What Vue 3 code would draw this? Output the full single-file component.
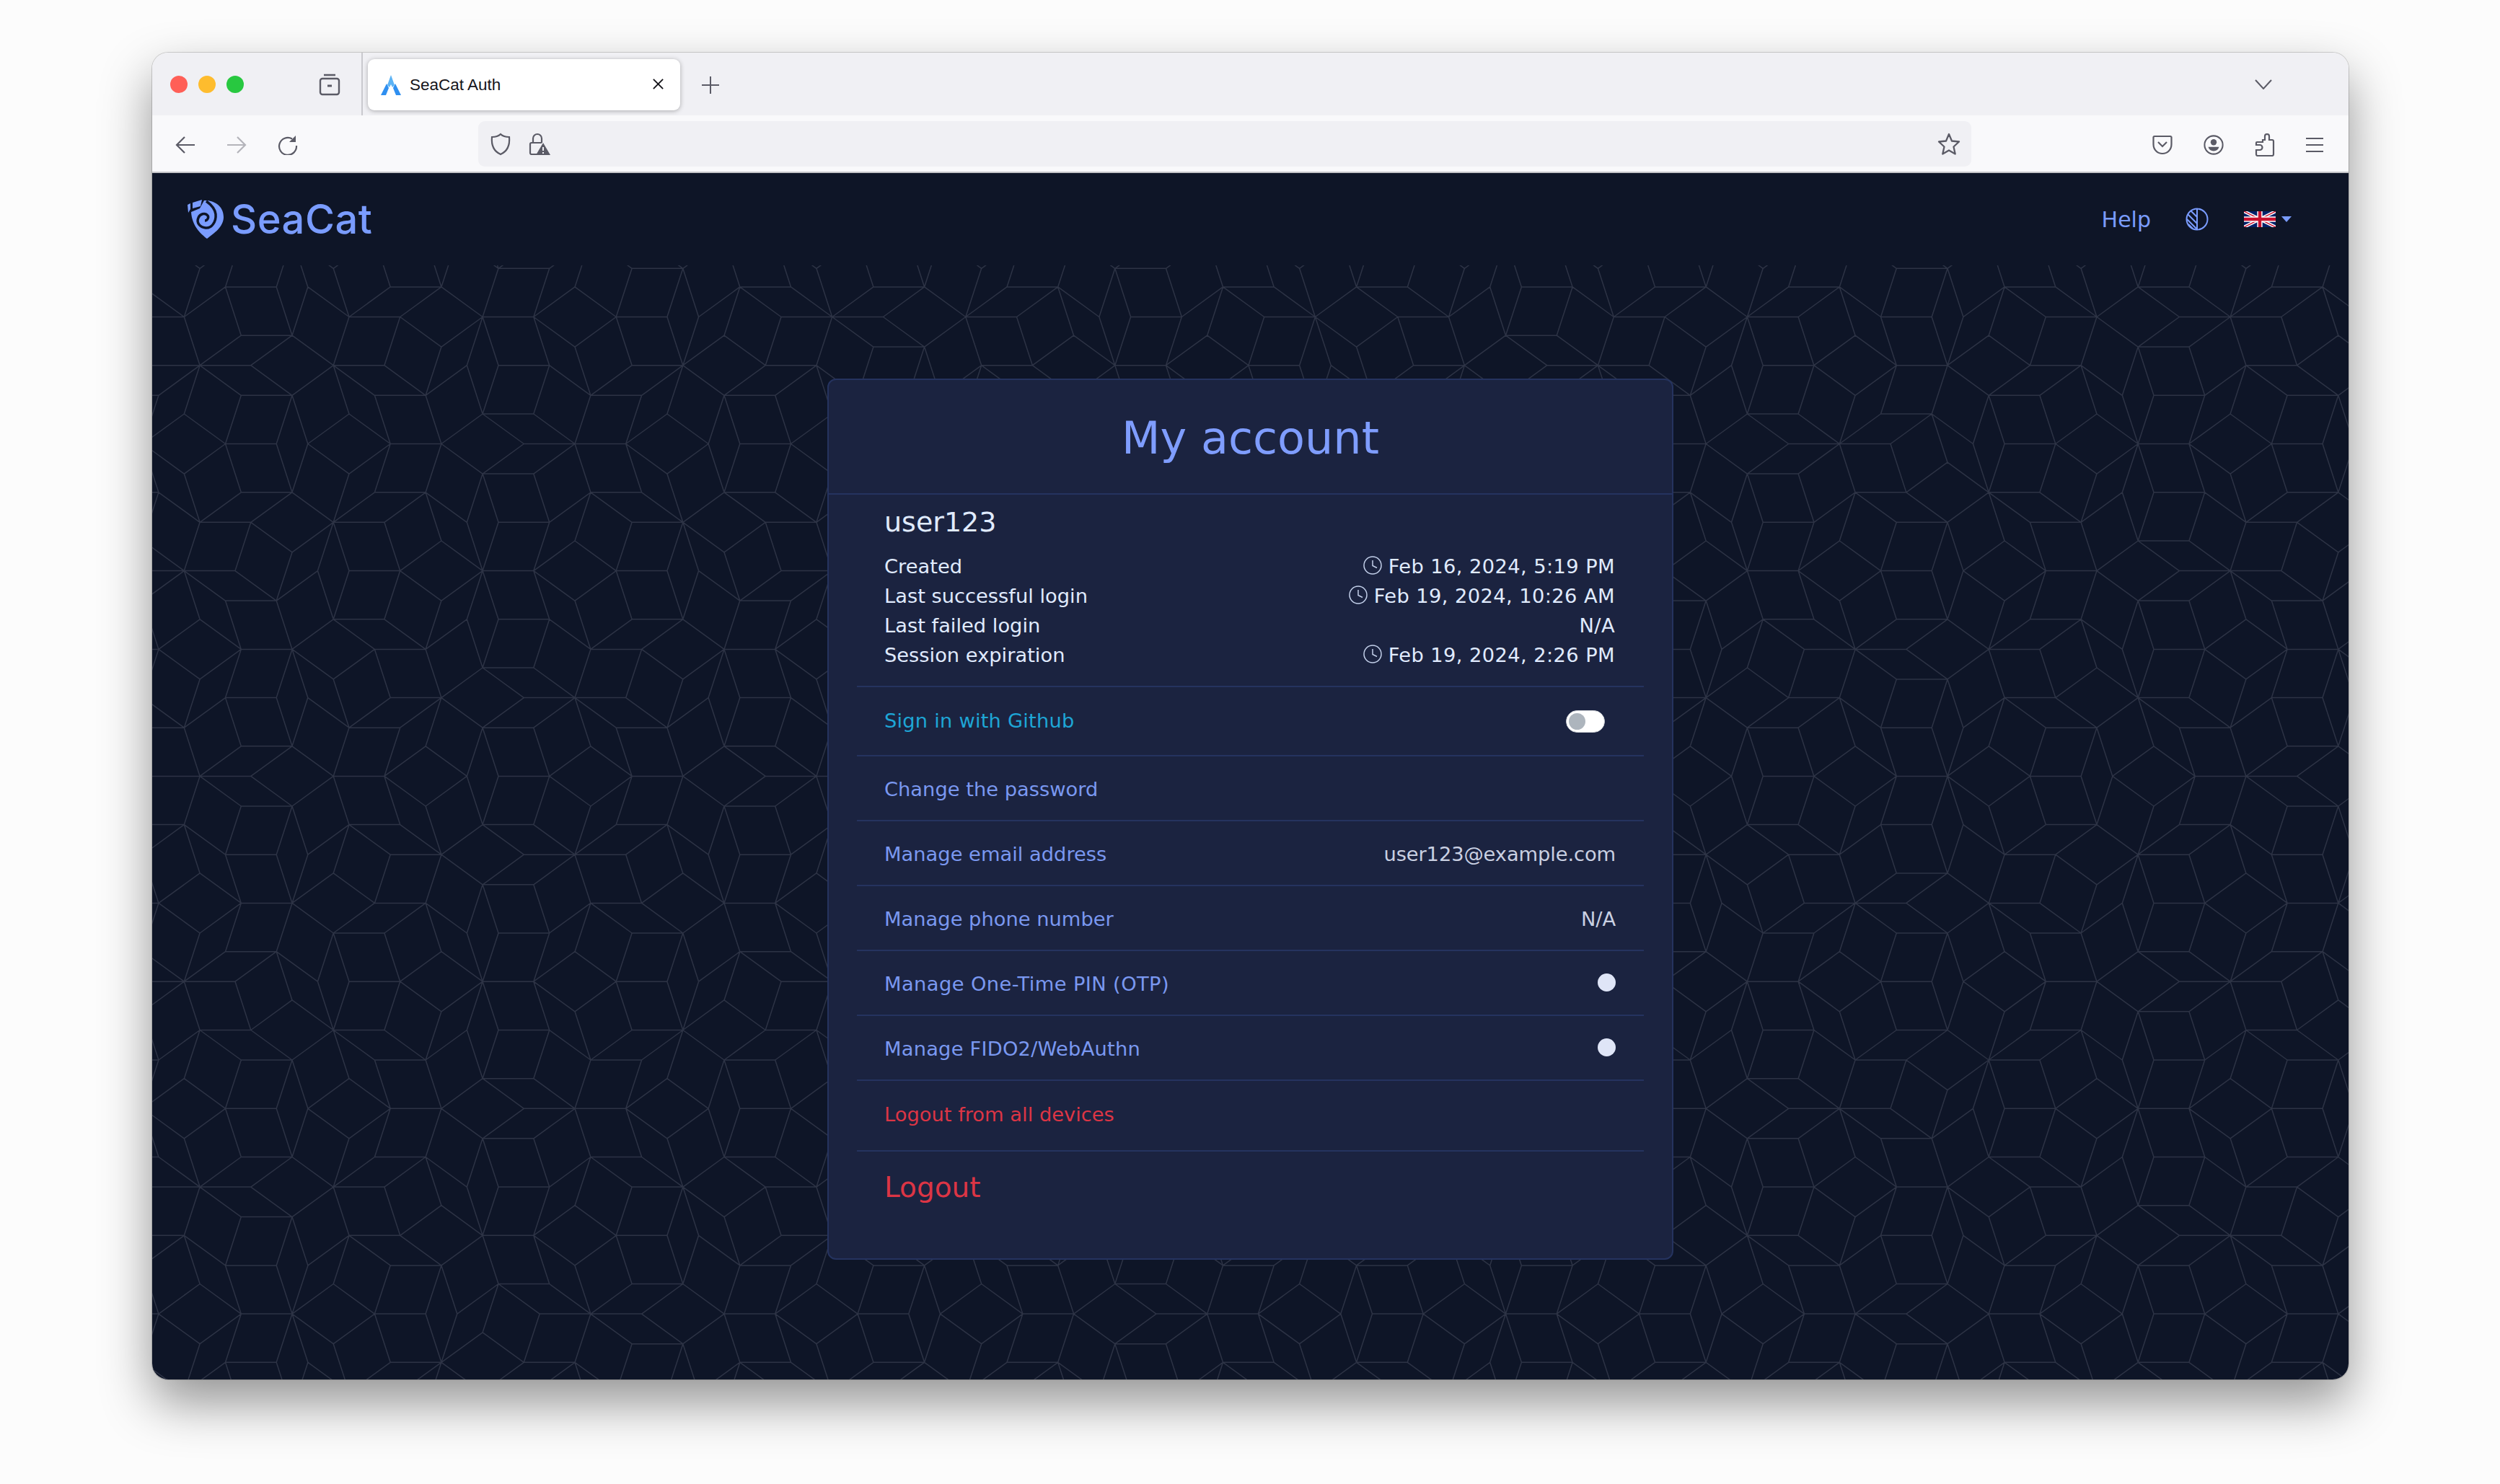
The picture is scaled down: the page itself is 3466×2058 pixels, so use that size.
<template>
  <div class="screen">
    <div class="window">
      <div class="tabstrip">
        <div class="lights">
          <span class="light red"></span>
          <span class="light yellow"></span>
          <span class="light green"></span>
        </div>
        <svg class="archive" viewBox="0 0 32 32" fill="none" stroke="#5b5b66" stroke-width="2.4">
          <path d="M8 3h16" />
          <rect x="3" y="8" width="26" height="22" rx="3" />
          <path d="M13 18h6" stroke-width="3" />
        </svg>
        <span class="tab-sep"></span>
        <div class="tab">
          <svg class="favicon" viewBox="0 0 30 28">
            <path d="M15 0l5 14-3 3-2-4-2 4-3-3z" fill="#5cb3f5" />
            <path d="M9 12l3 6-4 10H1z" fill="#2f8ff0" />
            <path d="M21 12l-3 6 4 10h7z" fill="#2f8ff0" />
          </svg>
          <span class="tab-title">SeaCat Auth</span>
          <svg class="tab-close" viewBox="0 0 18 18" fill="none" stroke="#15141a" stroke-width="2">
            <path d="M2 2l14 14M16 2L2 16" />
          </svg>
        </div>
        <svg class="newtab" viewBox="0 0 24 24" fill="none" stroke="#5b5b66" stroke-width="2">
          <path d="M12 0v24M0 12h24" />
        </svg>
        <svg class="tablist" viewBox="0 0 24 14" fill="none" stroke="#5b5b66" stroke-width="2">
          <path d="M1 1l11 12L23 1" />
        </svg>
      </div>

      <div class="toolbar">
        <svg class="tool" viewBox="0 0 28 28" fill="none" stroke="#5b5b66" stroke-width="2.2">
          <path d="M27 14H3M13 3L2 14l11 11" />
        </svg>
        <svg class="tool" viewBox="0 0 28 28" fill="none" stroke="#b4b4ba" stroke-width="2.2">
          <path d="M1 14h24M15 3l11 11-11 11" />
        </svg>
        <svg class="tool" viewBox="0 0 28 28" fill="none" stroke="#5b5b66" stroke-width="2.2">
          <path d="M20 5.500A12 12 0 1 0 26 15" />
          <path d="M25 1v9h-9" fill="#5b5b66" stroke="none" />
        </svg>
        <div class="urlbar">
          <svg class="url-shield" viewBox="0 0 30 32" fill="none" stroke="#5b5b66" stroke-width="2.2">
            <path d="M15 2c3 3 8 4 12 4 1 11-3 20-12 24C6 26 2 17 3 6c4 0 9-1 12-4z" />
          </svg>
          <svg class="url-lock" viewBox="0 0 30 32" fill="none" stroke="#5b5b66" stroke-width="2.2">
            <path d="M6 14V8a6 6 0 0 1 12 0v6" />
            <path d="M13 30H4a2 2 0 0 1-2-2V16a2 2 0 0 1 2-2h14" />
            <path d="M20 14l10 17H10z" fill="#5b5b66" stroke="none" />
            <path d="M20 20v5M20 27v2" stroke="#f0f0f4" stroke-width="2" />
          </svg>
          <svg class="url-star" viewBox="0 0 32 32" fill="none" stroke="#5b5b66" stroke-width="2.3" stroke-linejoin="round">
            <path d="M16 2l4 9.500 10 1-7.500 7 2.200 10L16 24.500l-8.700 5 2.200-10L2 12.500l10-1z" />
          </svg>
        </div>
        <svg class="tool" viewBox="0 0 28 28" fill="none" stroke="#5b5b66" stroke-width="2.2">
          <path d="M3 2h22a1.500 1.500 0 0 1 1.500 1.500V13c0 8-6 13-12.500 13S1.500 21 1.500 13V3.500A1.500 1.500 0 0 1 3 2z" />
          <path d="M8 10l6 6 6-6" />
        </svg>
        <svg class="tool" viewBox="0 0 30 30" fill="none" stroke="#5b5b66" stroke-width="2.2">
          <circle cx="15" cy="15" r="13.500" />
          <circle cx="15" cy="11" r="4.500" fill="#5b5b66" stroke="none" />
          <path d="M7 18h16c-1 4-4 6-8 6s-7-2-8-6z" fill="#5b5b66" stroke="none" />
        </svg>
        <svg class="tool puzzle" viewBox="0 0 28 32" fill="none" stroke="#5b5b66" stroke-width="2.2">
          <path d="M11 9h3V4a3 3 0 0 1 6 0v5h4a2 2 0 0 1 2 2v18a2 2 0 0 1-2 2H4a2 2 0 0 1-2-2v-6h5a3 3 0 0 0 0-7H2v-3a1 1 0 0 1 1-1h8z" />
        </svg>
        <svg class="tool menu" viewBox="0 0 28 24" fill="none" stroke="#5b5b66" stroke-width="2.2">
          <path d="M2 3h24M2 12h24M2 21h24" />
        </svg>
      </div>

      <div class="app">
        <header class="app-header">
          <div class="brand">
            <svg class="brand-mark" viewBox="0 0 50 55">
              <path d="M0 7l4-2v8l-3 5z" fill="#7a9cff" />
              <path d="M7 4L20 0l-2 9-11 3z" fill="#7a9cff" />
              <path d="M23 1C33 0 50 6 50 24 50 38 36 47 27 54 18 47 6 36 5 17l12-5z" fill="#7a9cff" />
              <path d="M26 2C33 7 38 12 39 20 40 31 33 40 25 39 17 38 12 32 15 25 17 20 24 17 28 22 30 25 27 29 24 29" fill="none" stroke="#0e1527" stroke-width="3.500" />
            </svg>
            <span class="brand-name">SeaCat</span>
          </div>
          <nav class="app-nav">
            <a class="help">Help</a>
            <svg class="theme" viewBox="0 0 32 32" fill="none" stroke="#7a9cff" stroke-width="2">
              <circle cx="16" cy="16" r="14.500" />
              <path d="M16 1.500v29M7 4l9 9M3 9l13 13M2 16l14 14M4 23l6 6" />
            </svg>
            <svg class="flag" viewBox="0 0 60 30">
              <rect width="60" height="30" fill="#012169" />
              <path d="M0 0l60 30M60 0L0 30" stroke="#fff" stroke-width="6" />
              <path d="M0 0l60 30M60 0L0 30" stroke="#c8102e" stroke-width="2" />
              <path d="M30 0v30M0 15h60" stroke="#fff" stroke-width="10" />
              <path d="M30 0v30M0 15h60" stroke="#c8102e" stroke-width="6" />
            </svg>
            <span class="caret"></span>
          </nav>
        </header>

        <main class="main">
          <svg class="tiles" width="3045" height="1545">
            <path :d="tilePath" fill="none" stroke="#2d3345" stroke-width="1.500" />
          </svg>

          <section class="card">
            <div class="card-head">
              <h2>My account</h2>
            </div>
            <div class="card-body">
              <h3 class="username">user123</h3>
              <div class="info">
                <div v-for="row in infoRows" :key="row.label" class="info-row">
                  <span>{{ row.label }}</span>
                  <span class="info-value">
                    <svg v-if="row.clock" class="clock" viewBox="0 0 26 26" fill="none" stroke="#c3d0ea" stroke-width="1.500">
                      <circle cx="13" cy="13" r="12" />
                      <path d="M13 6v7.500l6 3" />
                    </svg>
                    {{ row.value }}
                  </span>
                </div>
              </div>

              <ul class="items">
                <li class="item tall github">
                  <span>Sign in with Github</span>
                  <span class="toggle"><span class="knob"></span></span>
                </li>
                <li v-for="item in items" :key="item.label" class="item" :class="item.cls">
                  <span>{{ item.label }}</span>
                  <span v-if="item.value" class="item-value">{{ item.value }}</span>
                  <span v-if="item.dot" class="dot"></span>
                </li>
                <li class="item tall danger">
                  <span>Logout from all devices</span>
                </li>
              </ul>

              <div class="logout">Logout</div>
            </div>
          </section>
        </main>
      </div>
    </div>
  </div>
</template>

<script setup>
const infoRows = [
  { label: 'Created', value: 'Feb 16, 2024, 5:19 PM', clock: true },
  { label: 'Last successful login', value: 'Feb 19, 2024, 10:26 AM', clock: true },
  { label: 'Last failed login', value: 'N/A', clock: false },
  { label: 'Session expiration', value: 'Feb 19, 2024, 2:26 PM', clock: true }
]

const items = [
  { label: 'Change the password' },
  { label: 'Manage email address', value: 'user123@example.com' },
  { label: 'Manage phone number', value: 'N/A' },
  { label: 'Manage One-Time PIN (OTP)', dot: true, cls: 'wide' },
  { label: 'Manage FIDO2/WebAuthn', dot: true, cls: 'semi-wide' }
]

// background tiling: pentagrid with 5 directions, origin sits on a vertex
const EDGE = 70.7
const ORIGIN = [251.2, 708.4]
const OFFSET = -0.4
const AREA = { w: 3045, h: 1545 }
const COS = [0, 1, 2, 3, 4].map(j => Math.cos(2 * Math.PI * j / 5))
const SIN = [0, 1, 2, 3, 4].map(j => Math.sin(2 * Math.PI * j / 5))

function eachRhomb (box, cb) {
  const scale = 2.5 * EDGE
  const x0 = box[0] / scale - 0.7
  const x1 = box[1] / scale + 0.7
  const y0 = box[2] / scale - 0.7
  const y1 = box[3] / scale + 0.7
  const lo = []
  const hi = []
  for (let j = 0; j < 5; j++) {
    const vals = [x0 * COS[j] + y0 * SIN[j], x0 * COS[j] + y1 * SIN[j], x1 * COS[j] + y0 * SIN[j], x1 * COS[j] + y1 * SIN[j]]
    lo.push(Math.floor(Math.min(...vals) + OFFSET))
    hi.push(Math.ceil(Math.max(...vals) + OFFSET))
  }
  for (let j = 0; j < 4; j++) {
    for (let k = j + 1; k < 5; k++) {
      const det = COS[j] * SIN[k] - SIN[j] * COS[k]
      for (let a = lo[j]; a <= hi[j]; a++) {
        for (let b = lo[k]; b <= hi[k]; b++) {
          const bj = a - OFFSET
          const bk = b - OFFSET
          const zx = (bj * SIN[k] - bk * SIN[j]) / det
          const zy = (COS[j] * bk - COS[k] * bj) / det
          if (zx < x0 || zx > x1 || zy < y0 || zy > y1) continue
          let vx = a * COS[j] + b * COS[k]
          let vy = a * SIN[j] + b * SIN[k]
          for (let l = 0; l < 5; l++) {
            if (l === j || l === k) continue
            const n = Math.ceil(zx * COS[l] + zy * SIN[l] + OFFSET)
            vx += n * COS[l]
            vy += n * SIN[l]
          }
          cb(vx, vy, j, k)
        }
      }
    }
  }
}

function buildPath () {
  const seen = new Set()
  let d = ''
  const box = [-ORIGIN[0] - 150, AREA.w - ORIGIN[0] + 150, -ORIGIN[1] - 150, AREA.h - ORIGIN[1] + 150]
  const line = (ax, ay, bx, by) => {
    const x1 = ORIGIN[0] + ax * EDGE
    const y1 = ORIGIN[1] + ay * EDGE
    const x2 = ORIGIN[0] + bx * EDGE
    const y2 = ORIGIN[1] + by * EDGE
    const p = Math.round(x1) + ',' + Math.round(y1)
    const q = Math.round(x2) + ',' + Math.round(y2)
    const key = p < q ? p + q : q + p
    if (seen.has(key)) return
    seen.add(key)
    d += 'M' + x1.toFixed(1) + ' ' + y1.toFixed(1) + 'L' + x2.toFixed(1) + ' ' + y2.toFixed(1)
  }
  eachRhomb(box, (vx, vy, j, k) => {
    const ax = vx + COS[j]
    const ay = vy + SIN[j]
    const bx = vx + COS[k]
    const by = vy + SIN[k]
    const cx = ax + COS[k]
    const cy = ay + SIN[k]
    line(vx, vy, ax, ay)
    line(ax, ay, cx, cy)
    line(cx, cy, bx, by)
    line(bx, by, vx, vy)
  })
  return d
}

const tilePath = buildPath()
</script>

<style>
html, body {
  margin: 0;
  background: #fff;
}
</style>

<style scoped>
.screen {
  width: 3466px;
  height: 2058px;
  overflow: hidden;
  padding: 73px 0 0 211px;
  box-sizing: border-box;
  background: #fcfcfc;
}
.window {
  width: 3045px;
  height: 1840px;
  border-radius: 22px;
  overflow: hidden;
  box-shadow: 0 0 0 1px rgba(0, 0, 0, .16), 0 32px 70px rgba(0, 0, 0, .42);
  display: flex;
  flex-direction: column;
  font-family: "DejaVu Sans", sans-serif;
}

/* browser chrome */
.tabstrip {
  height: 87px;
  flex: none;
  background: #f0f0f4;
  display: flex;
  align-items: center;
}
.lights {
  display: flex;
  gap: 15px;
  margin-left: 25px;
  margin-top: 1px;
}
.light {
  width: 24px;
  height: 24px;
  border-radius: 50%;
}
.red { background: #ff5f57; }
.yellow { background: #febc2e; }
.green { background: #28c840; }
.archive {
  width: 32px;
  height: 32px;
  margin: 1px 0 0 103px;
}
.tab-sep {
  width: 2px;
  align-self: stretch;
  background: #c9c9ce;
  margin-left: 28px;
}
.tab {
  width: 433px;
  height: 71px;
  margin-left: 7px;
  margin-top: 2px;
  box-sizing: border-box;
  padding: 0 22px 0 17px;
  background: #fff;
  border-radius: 9px;
  box-shadow: 0 1px 6px rgba(0, 0, 0, .3);
  display: flex;
  align-items: center;
}
.favicon {
  width: 30px;
  height: 28px;
}
.tab-title {
  margin-left: 11px;
  font: 22.500px "Liberation Sans", sans-serif;
  color: #15141a;
}
.tab-close {
  width: 17px;
  height: 17px;
  margin-left: auto;
  margin-top: -2px;
}
.newtab {
  width: 24px;
  height: 24px;
  margin-left: 30px;
  margin-top: 3px;
}
.tablist {
  width: 24px;
  height: 14px;
  margin-left: auto;
  margin-right: 106px;
  margin-top: 0;
}

.toolbar {
  height: 80px;
  flex: none;
  box-sizing: border-box;
  background: #f9f9fb;
  border-bottom: 2px solid #c4c4c8;
  display: flex;
  align-items: center;
  padding-left: 32px;
  gap: 43px;
}
.tool {
  width: 28px;
  height: 28px;
  margin-top: 3px;
}
.puzzle {
  height: 32px;
}
.menu {
  margin-left: -2px;
}
.urlbar {
  width: 2070px;
  height: 63px;
  flex: none;
  margin-left: 207px;
  margin-right: 208px;
  margin-top: 1px;
  background: #f0f0f4;
  border-radius: 9px;
  display: flex;
  align-items: center;
  padding-left: 16px;
  box-sizing: border-box;
}
.url-shield {
  width: 30px;
  height: 32px;
}
.url-lock {
  width: 30px;
  height: 32px;
  margin-left: 24px;
}
.url-star {
  width: 32px;
  height: 32px;
  margin-left: auto;
  margin-right: 15px;
}

/* app */
.app {
  flex: 1;
  display: flex;
  flex-direction: column;
  background: #0e1527;
}
.app-header {
  height: 128px;
  flex: none;
  display: flex;
  align-items: center;
  justify-content: space-between;
  padding: 0 79px 0 49px;
}
.brand {
  display: flex;
  align-items: center;
  gap: 10px;
}
.brand-mark {
  width: 50px;
  height: 55px;
}
.brand-name {
  font: 500 56px Inter, sans-serif;
  letter-spacing: .5px;
  color: #7a9cff;
}
.app-nav {
  display: flex;
  align-items: center;
}
.help {
  font-size: 30px;
  color: #7a9cff;
}
.theme {
  width: 32px;
  height: 32px;
  margin-left: 48px;
}
.flag {
  width: 44px;
  height: 22px;
  margin-left: 49px;
}
.caret {
  width: 0;
  height: 0;
  margin-left: 8px;
  border-left: 7px solid transparent;
  border-right: 7px solid transparent;
  border-top: 8px solid #7a9cff;
}

.main {
  flex: 1;
  position: relative;
  overflow: hidden;
  display: flex;
  justify-content: center;
  align-items: flex-start;
}
.tiles {
  position: absolute;
  top: 0;
  left: 0;
}
.card {
  position: relative;
  width: 1173px;
  margin-top: 157px;
  box-sizing: border-box;
  background: #1b2340;
  border: 2px solid #25335f;
  border-radius: 12px;
  font-size: 27.300px;
  line-height: 41px;
  color: #e0ebff;
}
.card-head {
  height: 159px;
  box-sizing: border-box;
  padding-top: 4px;
  border-bottom: 2px solid #25335f;
  display: flex;
  align-items: center;
  justify-content: center;
}
h2 {
  margin: 0;
  font-weight: 400;
  font-size: 62px;
  line-height: 74px;
  color: #7f9dff;
}
.card-body {
  padding: 0 39px 75px;
}
.username {
  margin: 0;
  padding: 15px 40px 18px 38px;
  font-weight: 400;
  font-size: 38px;
  line-height: 46px;
}
.info {
  padding: 0 40px 22px 38px;
  border-bottom: 2px solid #25335f;
}
.info-row {
  display: flex;
  justify-content: space-between;
}
.info-value {
  display: flex;
  align-items: center;
  gap: 9px;
  letter-spacing: .4px;
}
.clock {
  width: 26px;
  height: 26px;
  margin-top: -3px;
}
.items {
  list-style: none;
  margin: 0;
  padding: 0;
}
.item {
  height: 90px;
  box-sizing: border-box;
  border-bottom: 2px solid #25335f;
  padding: 3px 39px 0 38px;
  display: flex;
  align-items: center;
  justify-content: space-between;
  color: #7a98f0;
}
.item.tall {
  height: 96px;
  padding-top: 0;
  padding-bottom: 2px;
}
.github {
  color: #1ea6d6;
  letter-spacing: .2px;
}
.wide {
  letter-spacing: .4px;
}
.semi-wide {
  letter-spacing: .2px;
}
.item.danger {
  height: 98px;
  padding-bottom: 4px;
  color: #dc3545;
}
.item-value {
  color: #c9d0e2;
  letter-spacing: -.1px;
}
.toggle {
  width: 54px;
  height: 31px;
  margin-right: 15px;
  margin-top: 2px;
  background: #fff;
  border: 1px solid #cfd3d8;
  box-sizing: border-box;
  border-radius: 16px;
  display: flex;
  align-items: center;
  padding-left: 3px;
}
.knob {
  width: 23px;
  height: 23px;
  border-radius: 50%;
  background: #adb5bd;
}
.dot {
  width: 25px;
  height: 25px;
  border-radius: 50%;
  background: #dfe5f7;
  margin-top: -4px;
}
.logout {
  padding: 26px 38px 0;
  font-size: 39px;
  line-height: 47px;
  color: #dc3545;
}
</style>
